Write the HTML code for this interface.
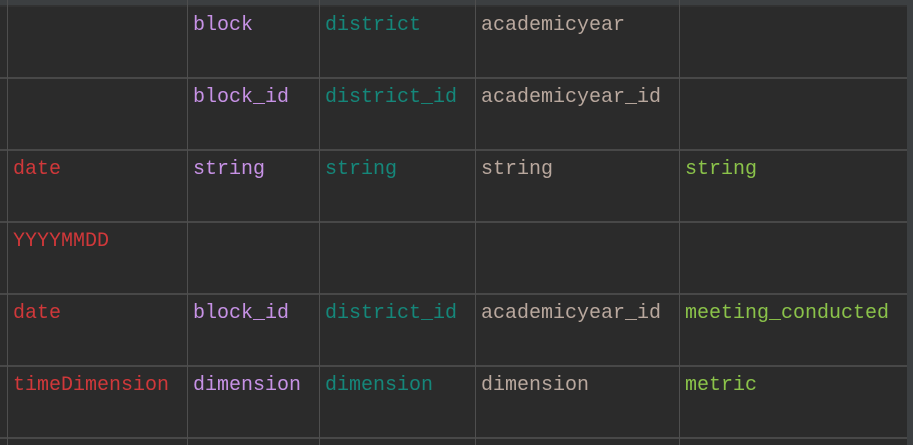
<!DOCTYPE html>
<html><head><style>
body{margin:0;width:913px;height:445px;background:#2b2b2b;overflow:hidden;position:relative;font-family:"Liberation Mono",monospace;font-size:20px}
.h{position:absolute;left:0;width:907px;height:2px;background:#484848}
.v{position:absolute;top:0;width:1px;height:445px;background:#4e4e4e}
.t{position:absolute;line-height:24px;white-space:pre;margin-top:2px}
.r{color:#d0383a}.p{color:#c792e6}.g{color:#15877a}.b{color:#b9a89e}.l{color:#8bc34a}
</style></head><body>
<div style="position:absolute;left:0;top:0;width:913px;height:5px;background:#3c3f41"></div>
<div style="position:absolute;left:0;top:5px;width:913px;height:2px;background:#323232"></div>
<div class="h" style="top:77px"></div><div class="h" style="top:149px"></div><div class="h" style="top:221px"></div><div class="h" style="top:293px"></div><div class="h" style="top:365px"></div><div class="h" style="top:437px"></div>
<div class="v" style="left:7px"></div><div class="v" style="left:187px"></div><div class="v" style="left:319px"></div><div class="v" style="left:475px"></div><div class="v" style="left:679px"></div>
<div style="position:absolute;left:907px;top:0;width:6px;height:445px;background:#3c3f41"></div>
<div class="t p" style="left:193px;top:12px">block</div><div class="t g" style="left:325px;top:12px">district</div><div class="t b" style="left:481px;top:12px">academicyear</div>
<div class="t p" style="left:193px;top:84px">block_id</div><div class="t g" style="left:325px;top:84px">district_id</div><div class="t b" style="left:481px;top:84px">academicyear_id</div>
<div class="t r" style="left:13px;top:156px">date</div><div class="t p" style="left:193px;top:156px">string</div><div class="t g" style="left:325px;top:156px">string</div><div class="t b" style="left:481px;top:156px">string</div><div class="t l" style="left:685px;top:156px">string</div>
<div class="t r" style="left:13px;top:228px">YYYYMMDD</div>
<div class="t r" style="left:13px;top:300px">date</div><div class="t p" style="left:193px;top:300px">block_id</div><div class="t g" style="left:325px;top:300px">district_id</div><div class="t b" style="left:481px;top:300px">academicyear_id</div><div class="t l" style="left:685px;top:300px">meeting_conducted</div>
<div class="t r" style="left:13px;top:372px">timeDimension</div><div class="t p" style="left:193px;top:372px">dimension</div><div class="t g" style="left:325px;top:372px">dimension</div><div class="t b" style="left:481px;top:372px">dimension</div><div class="t l" style="left:685px;top:372px">metric</div>
</body></html>
